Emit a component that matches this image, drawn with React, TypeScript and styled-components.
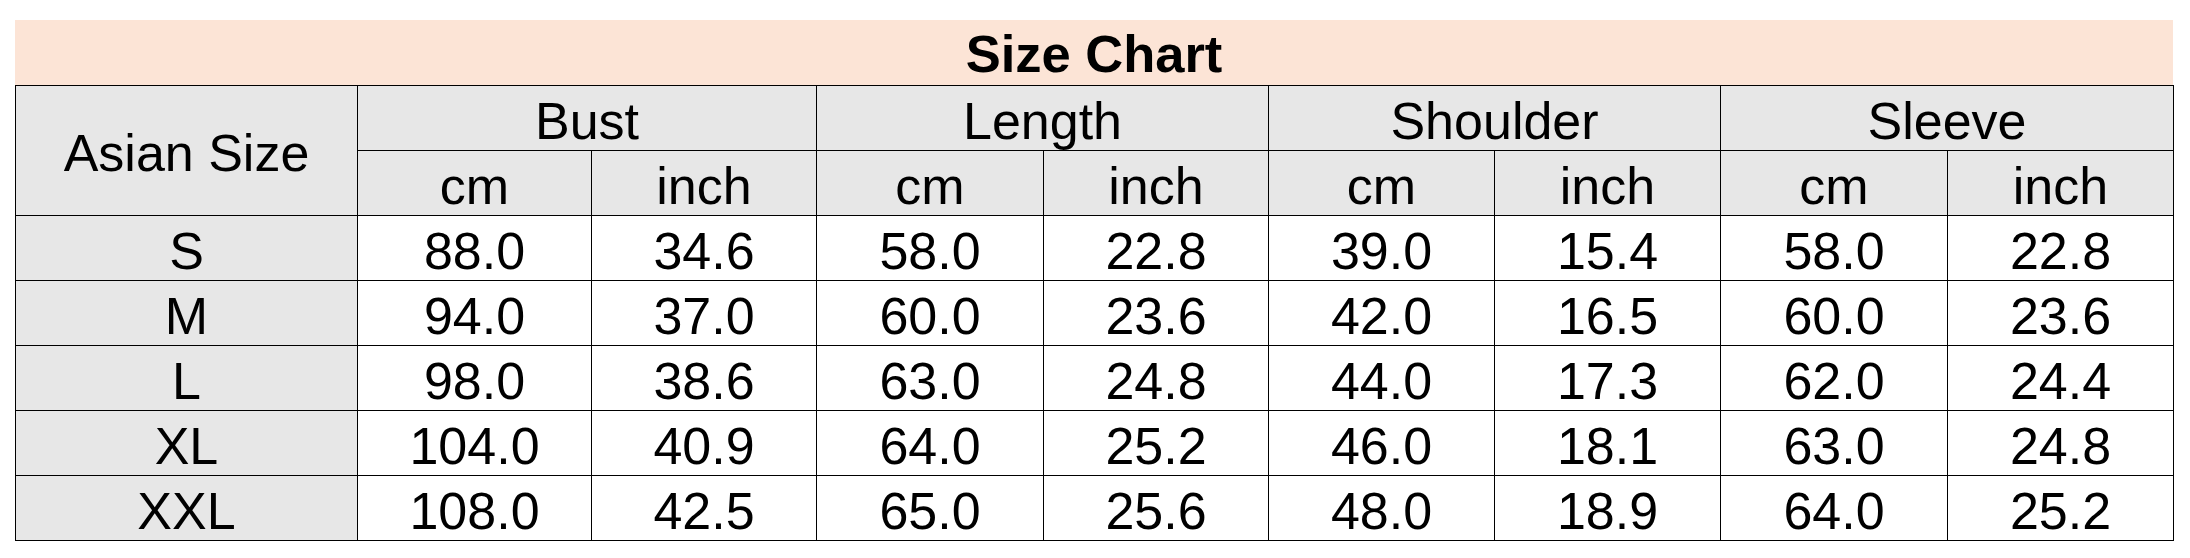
import React, { FC } from "react";
import styled, { createGlobalStyle } from "styled-components";

const GlobalStyle = createGlobalStyle`
  html, body {
    margin: 0;
    padding: 0;
    background: #ffffff;
  }
`;

const Page = styled.div`
  padding: 20px 0 0 15px;
  font-family: "Liberation Sans", Arial, sans-serif;
  color: #000000;
`;

const Chart = styled.div`
  width: 2158px;
`;

const Title = styled.div`
  height: 65px;
  background: #fce4d6;
  display: flex;
  align-items: center;
  justify-content: center;
  font-size: 52.5px;
  font-weight: 700;
  line-height: 1;
  padding-top: 3px;
  box-sizing: border-box;
`;

const Table = styled.table`
  width: 2158px;
  border-collapse: collapse;
  table-layout: fixed;
`;

const Cell = styled.td<{ $shade?: boolean }>`
  height: 65px;
  padding: 5px 0 0;
  box-sizing: border-box;
  border: 1px solid #000000;
  background: ${(p) => (p.$shade ? "#e7e7e7" : "#ffffff")};
  text-align: center;
  vertical-align: middle;
  font-size: 52px;
  font-weight: 400;
  line-height: 1;
  white-space: nowrap;
`;

const HeadCell = styled(Cell).attrs({ as: "th" })`
  background: #e7e7e7;
  font-weight: 400;
`;

const widths = [342, 234, 225, 227, 225, 226, 226, 227, 226];
const groups = ["Bust", "Length", "Shoulder", "Sleeve"];

const rows: [string, string[]][] = [
  ["S", ["88.0", "34.6", "58.0", "22.8", "39.0", "15.4", "58.0", "22.8"]],
  ["M", ["94.0", "37.0", "60.0", "23.6", "42.0", "16.5", "60.0", "23.6"]],
  ["L", ["98.0", "38.6", "63.0", "24.8", "44.0", "17.3", "62.0", "24.4"]],
  ["XL", ["104.0", "40.9", "64.0", "25.2", "46.0", "18.1", "63.0", "24.8"]],
  ["XXL", ["108.0", "42.5", "65.0", "25.6", "48.0", "18.9", "64.0", "25.2"]],
];

const App: FC = () => (
  <Page>
    <GlobalStyle />
    <Chart>
      <Title>Size Chart</Title>
      <Table>
        <colgroup>
          {widths.map((w, i) => (
            <col key={i} style={{ width: w }} />
          ))}
        </colgroup>
        <thead>
          <tr>
            <HeadCell rowSpan={2}>Asian Size</HeadCell>
            {groups.map((g) => (
              <HeadCell key={g} colSpan={2}>
                {g}
              </HeadCell>
            ))}
          </tr>
          <tr>
            {groups.map((g) => (
              <React.Fragment key={g}>
                <HeadCell>cm</HeadCell>
                <HeadCell>inch</HeadCell>
              </React.Fragment>
            ))}
          </tr>
        </thead>
        <tbody>
          {rows.map(([size, values]) => (
            <tr key={size}>
              <Cell $shade>{size}</Cell>
              {values.map((v, i) => (
                <Cell key={i}>{v}</Cell>
              ))}
            </tr>
          ))}
        </tbody>
      </Table>
    </Chart>
  </Page>
);

export default App;
